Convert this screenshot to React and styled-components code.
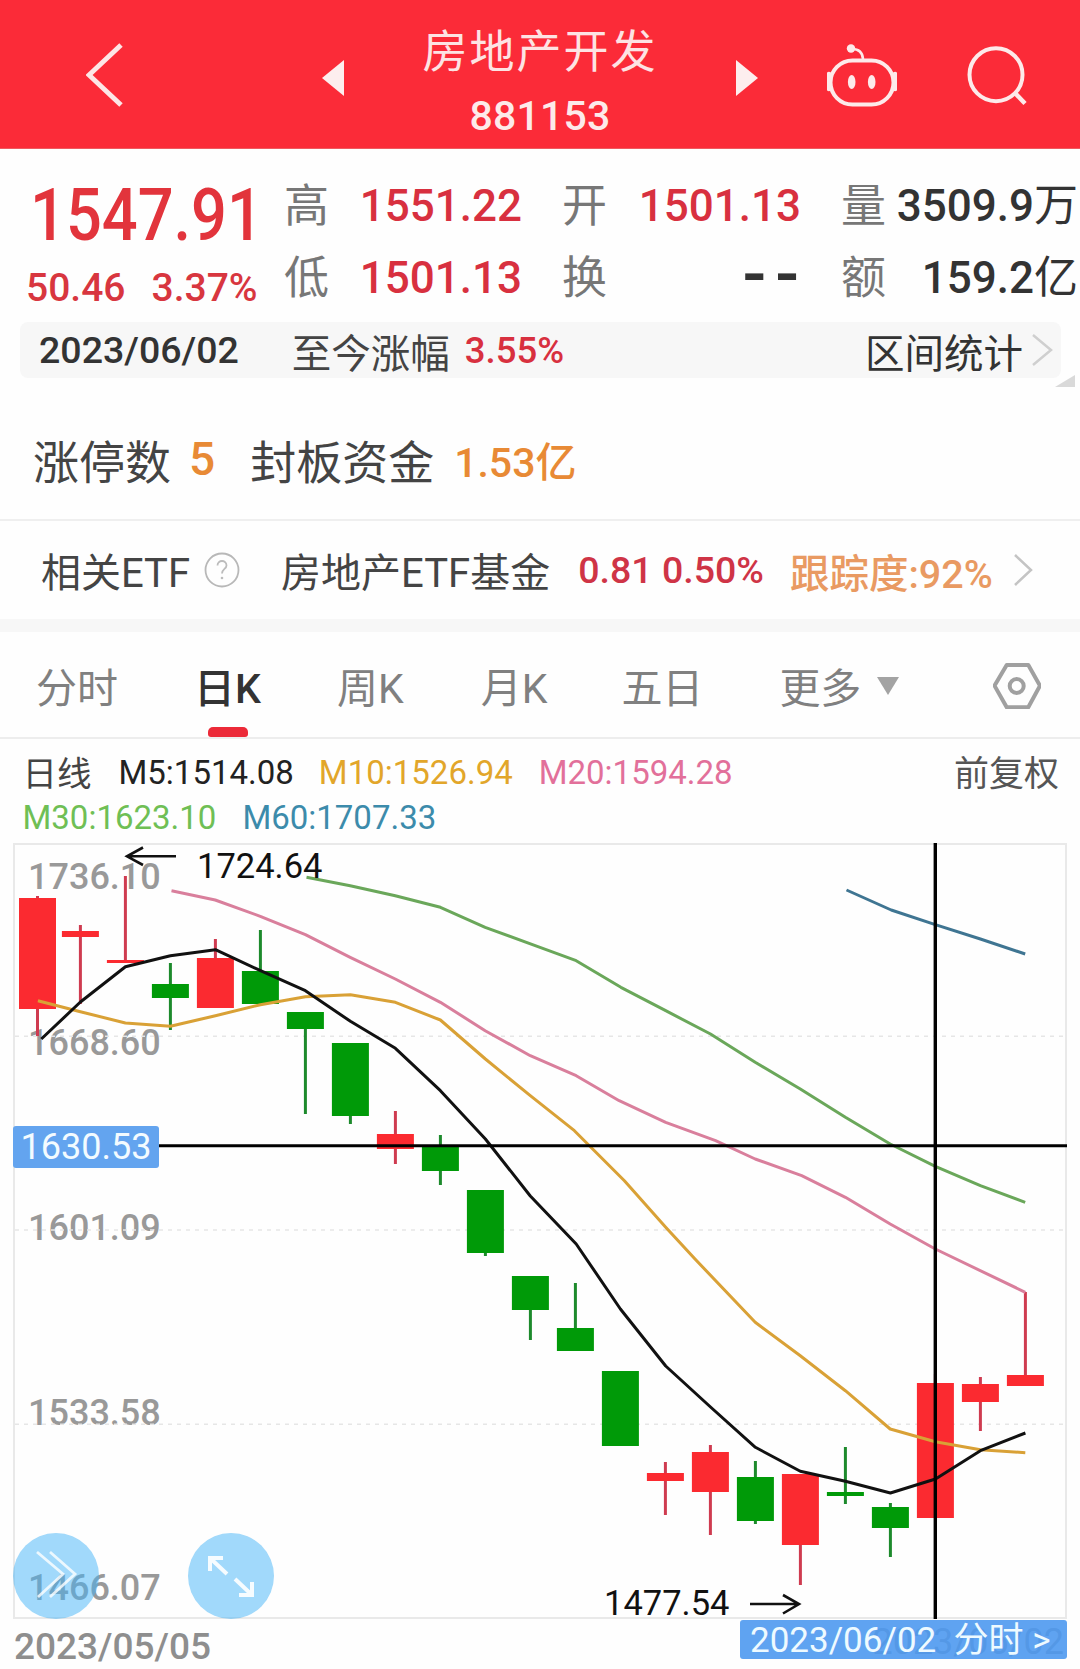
import React from "react";
import styled, { createGlobalStyle } from "styled-components";

const FONT = `Roboto, "Noto Sans CJK SC", sans-serif`;
const RED = "#d8303f";
const ORANGE = "#e88a35";
const BLUE = "rgba(78,153,240,.9)";

const Global = createGlobalStyle`
  html, body { margin: 0; padding: 0; background: #fff; }
  body { font-family: ${FONT}; }
`;

const Page = styled.div`
  width: 1080px; height: 1669px; overflow: hidden; background: #fefefe; position: relative;
`;

/* header */
const Header = styled.header`
  height: 149px; background: #fb2b38; display: flex; align-items: center; padding-left: 86px;
  box-sizing: border-box; color: #fff; border-bottom: 1px solid #ee5a60;
`;
const HeaderIcon = styled.svg`
  display: block; flex: none; margin-left: ${p => p.$ml || 0}px; margin-top: ${p => p.$mt || 0}px;
`;
const TitleBlock = styled.div`
  width: 392px; flex: none; display: flex; flex-direction: column; align-items: center; margin-top: 15px;
`;
const Title = styled.div`
  font-size: 45px; line-height: 54px; letter-spacing: 2px; color: #fde3e3; height: 68px;
`;
const Code = styled.div`
  font-size: 41px; line-height: 44px; letter-spacing: .2px; font-weight: 500; color: #fdeaea;
`;

/* quote */
const Quote = styled.section`
  display: flex; padding-top: 21px; height: 150px; box-sizing: border-box;
`;
const PriceBlock = styled.div`
  width: 284px; flex: none; padding-left: 26px; box-sizing: border-box;
`;
const Price = styled.div`
  font-size: 73px; line-height: 90px; height: 84px; font-weight: 500; color: #e2343c;
  margin-left: 4px; transform: scaleX(.865); transform-origin: left center; white-space: nowrap;
`;
const Change = styled.div`
  display: flex; gap: 26px; font-size: 39px; line-height: 68px; font-weight: 500; color: #d8363f; white-space: nowrap;
`;
const QuoteGrid = styled.div`
  display: grid; grid-template-columns: 238px 239px 237px; column-gap: 40px; grid-auto-rows: 72px;
`;
const Cell = styled.div`
  display: flex; justify-content: space-between; align-items: center; white-space: nowrap;
`;
const CellLabel = styled.span`
  font-size: 45px; color: #777; line-height: 1;
`;
const CellValue = styled.span`
  font-size: 44px; font-weight: 500; color: ${p => p.$dark ? "#333" : RED}; line-height: 1;
`;
const Dashes = styled.span`
  font-size: 70px; font-weight: 500; color: #333; line-height: 1; letter-spacing: 9px; margin: -8px -7px 0 0;
`;
const Unit = styled.span`
  font-size: 44px; font-weight: 400;
`;

/* range bar */
const RangeBar = styled.div`
  position: relative; margin-left: 20px; width: 1041px; height: 56px; box-sizing: border-box;
  margin-top: 23px; background: #f7f7f7; border-radius: 8px; display: flex; align-items: center;
  padding: 0 8px 0 19px;
`;
const RangeDate = styled.span`
  font-size: 37.5px; color: #333; font-weight: 500;
`;
const RangeLabel = styled.span`
  font-size: 39.5px; color: #444; margin-left: ${p => p.$ml}px;
`;
const RangeValue = styled.span`
  font-size: 36.5px; font-weight: 500; color: ${RED}; margin-left: 15px;
`;
const RangeStat = styled.span`
  font-size: 39.5px; color: #333; margin-left: auto; margin-right: 8px;
`;
const Corner = styled.i`
  position: absolute; right: -14px; bottom: -9px; width: 20px; height: 12px; background: #d9d9d9;
  clip-path: polygon(100% 0, 100% 100%, 0 100%);
`;

/* limit row */
const LimitRow = styled.section`
  height: 143px; box-sizing: border-box; padding: 21px 0 0 33px; display: flex; align-items: center;
  border-bottom: 2px solid #efefef;
`;
const LimitLabel = styled.span`
  font-size: 46px; color: #444; margin-left: ${p => p.$ml || 0}px;
`;
const LimitValue = styled.span`
  font-size: ${p => p.$size || 41}px; font-weight: 500; color: ${ORANGE}; margin-left: ${p => p.$ml}px;
`;

/* etf row */
const EtfRow = styled.section`
  height: 98px; padding-left: 41px; display: flex; align-items: center; white-space: nowrap;
`;
const EtfLabel = styled.span`
  font-size: 40px; color: #444; margin-left: ${p => p.$ml || 0}px;
`;
const HelpIcon = styled.svg`
  flex: none; margin-left: 14px;
`;
const EtfQuote = styled.span`
  font-size: 37.5px; font-weight: 500; color: #cf3446; margin-left: 28px;
`;
const EtfTrack = styled.span`
  font-size: 39.5px; color: #e99a62; margin-left: 26px; font-weight: 500;
`;
const EtfArrow = styled.span`
  margin-left: 20px; display: block;
`;
const Band = styled.div`
  height: 13px; background: #f7f7f7;
`;

/* tabs */
const Tabs = styled.nav`
  height: 107px; box-sizing: border-box; padding-left: 36px; display: flex; align-items: center;
  border-bottom: 2px solid #ededed; position: relative;
`;
const Tab = styled.span`
  position: relative; font-size: 41px; color: ${p => p.$active ? "#333" : "#808080"};
  font-weight: ${p => p.$active ? 500 : 400}; margin-left: ${p => p.$ml || 0}px; align-self: stretch;
  display: flex; align-items: center; padding-top: 1px;
`;
const TabMark = styled.i`
  position: absolute; left: 14px; bottom: 0; width: 40px; height: 10px; border-radius: 5px 5px 3px 3px; background: #ec2a38;
`;
const MoreCaret = styled.svg`
  flex: none; margin: 2px 0 0 16px;
`;
const SettingsIcon = styled.svg`
  flex: none; margin: 2px 0 0 94px;
`;

/* legend */
const Legend = styled.section`
  height: 104px; box-sizing: border-box; padding: 11px 21px 0 22.5px;
`;
const LegendRow = styled.div`
  height: 45px; display: flex; align-items: center; white-space: nowrap;
`;
const LegendName = styled.span`
  font-size: 34.5px; color: #444; margin: -4px 27px 0 0;
`;
const Ma = styled.span`
  font-size: 33px; font-weight: 400; color: ${p => p.$c}; margin-right: ${p => p.$mr || 26}px;
`;
const Adjust = styled.span`
  font-size: 35px; color: #555; margin: -4px 0 0 auto;
`;

/* chart */
const ChartArea = styled.div`
  position: relative; height: 776px;
`;
const ChartSvg = styled.svg`
  position: relative; display: block;
`;
const AxisLabel = styled.span`
  position: absolute; left: 28px; top: ${p => p.$y - 864}px; font-size: 36px; line-height: 40px; color: #999; font-weight: 500;
`;
const Note = styled.span`
  position: absolute; left: ${p => p.$x}px; top: ${p => p.$y - 864}px; font-size: 34.5px; line-height: 40px; color: #111; z-index: 2;
`;
const CrossValue = styled.span`
  position: absolute; z-index: 2; left: 13px; top: 283px; width: 146px; height: 42px; background: #63a4ef; color: #f3fbff;
  font-size: 36px; line-height: 43px; text-align: center; border-radius: 3px;
`;
const FloatButton = styled.button`
  position: absolute; z-index: 3; left: ${p => p.$x}px; top: 690px; width: 86px; height: 86px; padding: 0; border: 0;
  border-radius: 50%; background: rgba(67,179,247,.5);
`;
const FloatIcon = styled.svg`
  display: block;
`;

/* footer */
const Footer = styled.footer`
  position: relative; height: 49px; padding-left: 14px; display: flex; align-items: center;
`;
const StartDate = styled.span`
  font-size: 37px; font-weight: 500; color: #8e8e8e; margin-top: 6px;
`;
const GhostDate = styled.span`
  position: absolute; right: 16px; top: 3px; font-size: 36px; line-height: 40px; color: #8a8a8a;
`;
const DateTag = styled.div`
  position: absolute; left: 740px; top: 1px; width: 327px; height: 39px; background: ${BLUE}; border-radius: 3px;
  color: #eefaff; font-size: 35px; line-height: 42px; padding-left: 10px; box-sizing: border-box; white-space: nowrap;
`;

const CX = i => (i === 0 ? 37.5 : 80.4 + 45 * (i - 1));
const CANDLES = [
  ["r", 897, 899, 1010, 1037], ["r", 926, 932, 938, 1005], ["r", 877, 961, 964, 964],
  ["g", 964, 985, 999, 1031], ["r", 940, 959, 1009, 1009], ["g", 931, 972, 1005, 1005],
  ["g", 1013, 1013, 1030, 1115], ["g", 1044, 1044, 1117, 1125], ["r", 1112, 1135, 1150, 1165],
  ["g", 1136, 1147, 1172, 1186], ["g", 1191, 1191, 1254, 1257], ["g", 1277, 1277, 1311, 1341],
  ["g", 1284, 1329, 1352, 1352], ["g", 1372, 1372, 1447, 1447], ["r", 1463, 1474, 1482, 1516],
  ["r", 1446, 1453, 1493, 1536], ["g", 1462, 1478, 1522, 1525], ["r", 1475, 1475, 1546, 1586],
  ["g", 1448, 1493, 1497, 1505], ["g", 1504, 1508, 1529, 1558], ["r", 1375, 1384, 1519, 1519],
  ["r", 1378, 1385, 1403, 1432], ["r", 1293, 1376, 1387, 1387],
];
const LINES = [
  ["#d97f9c", "171.5,891.7 215.2,901 260.3,917.3 305.4,935.7 350.2,958.3 395.3,980 440.4,1003.3 485.2,1031.7 530.3,1056.7 576.2,1076.7 619.2,1101.7 665.7,1123.3 715.6,1141.7 755.2,1160 801.7,1176.7 845.4,1198.3 890.2,1225 935.3,1250 1025.3,1293.3"],
  ["#6aa75a", "306.5,878.3 350.2,886.7 395.3,896.7 440.4,908.3 485.2,928.3 540,948.3 576.2,961.7 620.9,988.3 665.7,1011.7 710.5,1035 755.2,1063.3 800.3,1090 845.4,1118.3 890.2,1145 935.3,1167.3 980.4,1186.7 1025.2,1203.3"],
  ["#3f7592", "846.5,891 891.2,911 935.3,925.7 980.4,940 1025.2,955"],
  ["#d9a136", "37.9,1001.7 80.4,1012.7 125.4,1024 170.4,1027.3 215.4,1016.7 260.4,1005.7 305.4,997.7 350.4,995.7 395.4,1003.3 440.4,1021 485.4,1060 530.3,1096.7 574.4,1131.7 624.4,1181.7 665.7,1228.3 695,1260 755.2,1323.3 800.3,1356.7 845.4,1391.7 890.2,1430 935.3,1442.7 980.4,1450.7 1025.3,1453.7"],
  ["#111", "41.3,1040 80.4,1003 125.4,967.7 170.4,956.7 215.4,950.7 260.5,971.7 305.4,991.7 350.4,1022.3 395.4,1049.3 440.4,1091.7 485.4,1140 530.3,1197 576.2,1245 620.4,1310 665.7,1367 710.5,1408 755.4,1448.3 800.3,1472.3 845.4,1482.3 890.4,1494 935.5,1480 980.4,1451.7 1025.4,1434"],
];

const ChevronSvg = styled.svg`
  flex: none; display: block;
`;
const Chevron = ({ w, h, color, sw = 2.5 }) => (
  <ChevronSvg width={w} height={h} viewBox={`0 0 ${w} ${h}`}>
    <polyline points={`2,2 ${w - 2},${h / 2} 2,${h - 2}`} fill="none" stroke={color} strokeWidth={sw} />
  </ChevronSvg>
);

const Chart = () => (
  <ChartSvg width="1080" height="776" viewBox="0 844 1080 776">
    <rect x="14" y="845" width="1052" height="774" fill="none" stroke="#e9e9e9" strokeWidth="2" />
    {[1037.3, 1231, 1425.3].map(y => (
      <line key={y} x1="15" x2="1065" y1={y} y2={y} stroke="#e6e6e6" strokeWidth="1.5" strokeDasharray="4 5" />
    ))}
    {CANDLES.map(([c, wt, bt, bb, wb], i) => (
      <g key={i}>
        <line x1={CX(i)} x2={CX(i)} y1={wt} y2={wb} stroke={c === "r" ? "#cf3b50" : "#1d8a2c"} strokeWidth="3" />
        <rect x={CX(i) - 18.5} y={bt} width="37" height={bb - bt} fill={c === "r" ? "#fb2a30" : "#009a08"} />
      </g>
    ))}
    {LINES.map(([c, pts]) => (
      <polyline key={c} points={pts} fill="none" stroke={c} strokeWidth="3" strokeLinejoin="round" />
    ))}
    <line x1="159" x2="1067" y1="1146.7" y2="1146.7" stroke="#000" strokeWidth="3" />
    <line x1="935.3" x2="935.3" y1="843" y2="1620" stroke="#000" strokeWidth="3.4" />
    <g fill="none" stroke="#111" strokeWidth="2.6">
      <path d="M176 857.3H127M143 848.5L127 857.3L143 866" />
      <path d="M750 1605H799M783 1596L799 1605L783 1614.5" />
    </g>
  </ChartSvg>
);

export default function App() {
  return (
    <Page>
      <Global />
      <Header>
        <HeaderIcon width="38" height="64" viewBox="0 0 38 64" $mt="1">
          <polyline points="35,2 3,32 35,62" fill="none" stroke="#fde6e6" strokeWidth="5" />
        </HeaderIcon>
        <HeaderIcon width="22" height="36" viewBox="0 0 22 36" $ml="198" $mt="8">
          <polygon points="22,0 0,18 22,36" fill="#fdeeee" />
        </HeaderIcon>
        <TitleBlock>
          <Title>房地产开发</Title>
          <Code>881153</Code>
        </TitleBlock>
        <HeaderIcon width="22" height="36" viewBox="0 0 22 36" $mt="8">
          <polygon points="0,0 22,18 0,36" fill="#fdeeee" />
        </HeaderIcon>
        <HeaderIcon width="70" height="64" viewBox="826 45 70 64" $ml="69" $mt="4">
          <rect x="829.5" y="61.5" width="63" height="44" rx="22" fill="none" stroke="#fdeaea" strokeWidth="4" />
          <path d="M828 75v15M894 75v15" stroke="#fdeaea" strokeWidth="4.5" strokeLinecap="round" />
          <circle cx="850" cy="49.5" r="4.2" fill="#fdeaea" />
          <path d="M851 50c6 0 10.500 3 11 10" fill="none" stroke="#fdeaea" strokeWidth="2.600" />
          <ellipse cx="850.700" cy="83" rx="3.800" ry="7" fill="#fdeaea" />
          <ellipse cx="870.700" cy="83" rx="3.800" ry="7" fill="#fdeaea" />
        </HeaderIcon>
        <HeaderIcon width="62" height="62" viewBox="966 47 62 62" $ml="70" $mt="4">
          <circle cx="995" cy="76.700" r="26.500" fill="none" stroke="#fdeaea" strokeWidth="4" />
          <path d="M1014 95L1024 105.500" stroke="#fdeaea" strokeWidth="4.500" />
        </HeaderIcon>
      </Header>

      <Quote>
        <PriceBlock>
          <Price>1547.91</Price>
          <Change>
            <span>50.46</span>
            <span>3.37%</span>
          </Change>
        </PriceBlock>
        <QuoteGrid>
          <Cell><CellLabel>高</CellLabel><CellValue>1551.22</CellValue></Cell>
          <Cell><CellLabel>开</CellLabel><CellValue>1501.13</CellValue></Cell>
          <Cell><CellLabel>量</CellLabel><CellValue $dark>3509.9<Unit>万</Unit></CellValue></Cell>
          <Cell><CellLabel>低</CellLabel><CellValue>1501.13</CellValue></Cell>
          <Cell><CellLabel>换</CellLabel><Dashes>--</Dashes></Cell>
          <Cell><CellLabel>额</CellLabel><CellValue $dark>159.2<Unit>亿</Unit></CellValue></Cell>
        </QuoteGrid>
      </Quote>

      <RangeBar>
        <RangeDate>2023/06/02</RangeDate>
        <RangeLabel $ml="53">至今涨幅</RangeLabel>
        <RangeValue>3.55%</RangeValue>
        <RangeStat>区间统计</RangeStat>
        <Chevron w={22} h={34} color="#cfcfcf" />
        <Corner />
      </RangeBar>

      <LimitRow>
        <LimitLabel>涨停数</LimitLabel>
        <LimitValue $ml="18" $size="46">5</LimitValue>
        <LimitLabel $ml="35">封板资金</LimitLabel>
        <LimitValue $ml="20">1.53亿</LimitValue>
      </LimitRow>

      <EtfRow>
        <EtfLabel>相关ETF</EtfLabel>
        <HelpIcon width="36" height="36" viewBox="0 0 36 36">
          <circle cx="18" cy="18" r="16.500" fill="none" stroke="#b8b8b8" strokeWidth="1.800" />
          <path d="M13.500 13.500c0-6 9-6 9 0c0 3.500-4.500 3.500-4.500 8" fill="none" stroke="#bcbcbc" strokeWidth="1.800" />
          <circle cx="18" cy="26" r="1.300" fill="#bcbcbc" />
        </HelpIcon>
        <EtfLabel $ml="41">房地产ETF基金</EtfLabel>
        <EtfQuote>0.81 0.50%</EtfQuote>
        <EtfTrack>跟踪度:92%</EtfTrack>
        <EtfArrow><Chevron w={20} h={34} color="#c4c4c4" /></EtfArrow>
      </EtfRow>
      <Band />

      <Tabs>
        <Tab>分时</Tab>
        <Tab $ml="76" $active>日K<TabMark /></Tab>
        <Tab $ml="76">周K</Tab>
        <Tab $ml="77">月K</Tab>
        <Tab $ml="74">五日</Tab>
        <Tab $ml="76">更多</Tab>
        <MoreCaret width="22" height="18" viewBox="0 0 22 18">
          <polygon points="0,0 22,0 11,18" fill="#a3a3a3" />
        </MoreCaret>
        <SettingsIcon width="48" height="46" viewBox="993 663 48 46">
          <polygon points="1006.700,665 1028.300,665 1040,685.700 1028.300,707.300 1006.700,707.300 994.500,685.700" fill="none" stroke="#a0a0a0" strokeWidth="4" strokeLinejoin="round" />
          <circle cx="1016.700" cy="686" r="7" fill="none" stroke="#a0a0a0" strokeWidth="4" />
        </SettingsIcon>
      </Tabs>

      <Legend>
        <LegendRow>
          <LegendName>日线</LegendName>
          <Ma $c="#222" $mr="25">M5:1514.08</Ma>
          <Ma $c="#e2a62a">M10:1526.94</Ma>
          <Ma $c="#e2709a">M20:1594.28</Ma>
          <Adjust>前复权</Adjust>
        </LegendRow>
        <LegendRow>
          <Ma $c="#6fbf55" $mr="26">M30:1623.10</Ma>
          <Ma $c="#3c8bab">M60:1707.33</Ma>
        </LegendRow>
      </Legend>

      <ChartArea>
        <AxisLabel $y={878}>1736.10</AxisLabel>
        <AxisLabel $y={1043.500}>1668.60</AxisLabel>
        <AxisLabel $y={1229}>1601.09</AxisLabel>
        <AxisLabel $y={1413.500}>1533.58</AxisLabel>
        <AxisLabel $y={1588.500}>1466.07</AxisLabel>
        <Chart />
        <Note $x={197} $y={867}>1724.64</Note>
        <Note $x={604} $y={1604}>1477.54</Note>
        <CrossValue>1630.53</CrossValue>
        <FloatButton $x={13}>
          <FloatIcon width="86" height="86" viewBox="0 0 86 86">
            <path d="M24 19L50 41L25 64M37 19L62 41L37 64" fill="none" stroke="#fff" strokeOpacity=".8" strokeWidth="2.800" />
          </FloatIcon>
        </FloatButton>
        <FloatButton $x={188}>
          <FloatIcon width="86" height="86" viewBox="0 0 86 86">
            <path d="M22 25L39 41M22 38V25H35M47 46L64 62M64 49V62H51" fill="none" stroke="#fff" strokeOpacity=".9" strokeWidth="4" />
          </FloatIcon>
        </FloatButton>
      </ChartArea>

      <Footer>
        <StartDate>2023/05/05</StartDate>
        <GhostDate>2023/06/02</GhostDate>
        <DateTag>2023/06/02&nbsp; 分时&nbsp;&gt;</DateTag>
      </Footer>
    </Page>
  );
}
